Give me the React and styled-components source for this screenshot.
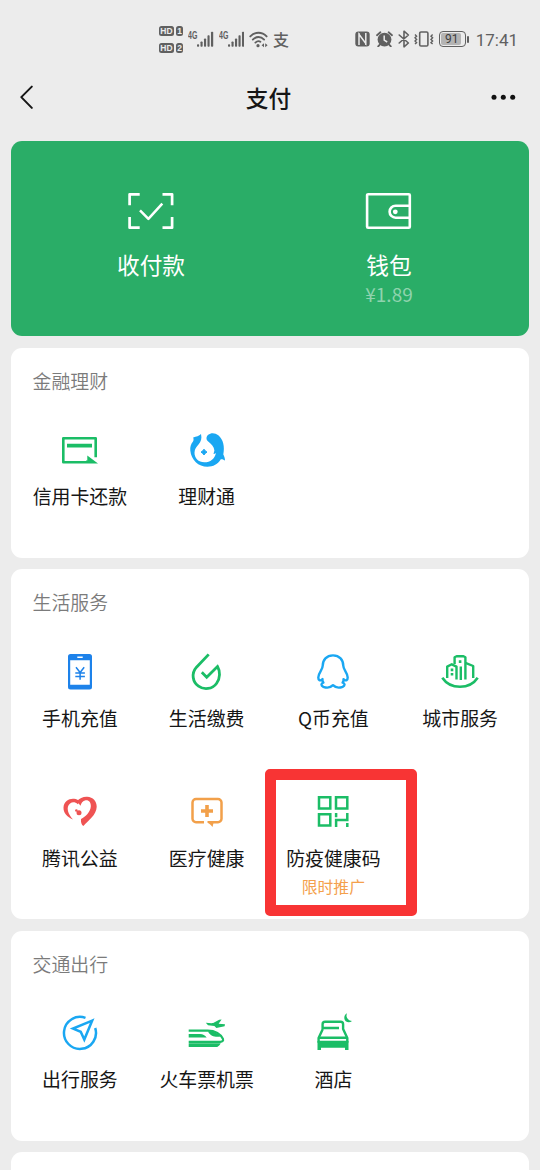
import styled, { createGlobalStyle } from "styled-components";

const GREEN = "#1bbd66";
const BLUE = "#1aa7f2";
const GRAY = "#606060";

const GlobalStyle = createGlobalStyle`
  * {
    box-sizing: border-box;
  }

  body {
    margin: 0;
    overflow: hidden;
    background-color: #ececec;
    font-family: "Noto Sans CJK SC", sans-serif;
    color: #161616;
  }
`;

const finance = [
  { label: "信用卡还款", Icon: CardIcon },
  { label: "理财通", Icon: FishIcon },
];

const life = [
  { label: "手机充值", Icon: PhoneIcon },
  { label: "生活缴费", Icon: DropIcon },
  { label: "Q币充值", Icon: PenguinIcon },
  { label: "城市服务", Icon: CityIcon },
  { label: "腾讯公益", Icon: HeartIcon },
  { label: "医疗健康", Icon: MedicalIcon },
  { label: "防疫健康码", Icon: CodeIcon, note: "限时推广", marked: true },
];

const travel = [
  { label: "出行服务", Icon: CompassIcon },
  { label: "火车票机票", Icon: TrainIcon },
  { label: "酒店", Icon: HotelIcon },
];

export default function App() {
  return (
    <Page>
      <GlobalStyle />
      <StatusBar />
      <Header>
        <BackIcon />
        <Title>支付</Title>
        <MoreIcon />
      </Header>
      <Content>
        <PayCard>
          <PayItem>
            <ScanIcon />
            <PayLabel>收付款</PayLabel>
          </PayItem>
          <PayItem>
            <WalletIcon />
            <PayLabel>钱包</PayLabel>
            <Balance>¥1.89</Balance>
          </PayItem>
        </PayCard>
        <Section title="金融理财" items={finance} />
        <Section title="生活服务" items={life} />
        <Section title="交通出行" items={travel} />
        <Card />
      </Content>
    </Page>
  );
}

function Section({ title, items }) {
  return (
    <Card>
      <SectionTitle>{title}</SectionTitle>
      <Grid>
        {items.map(({ label, Icon, note, marked }) => (
          <Item key={label}>
            <Icon />
            <Label>{label}</Label>
            {note && <Note>{note}</Note>}
            {marked && <Marker />}
          </Item>
        ))}
      </Grid>
    </Card>
  );
}

function StatusBar() {
  return (
    <Status>
      <StatusGroup $gap={5}>
        <HdList>
          <HdRow>
            <Badge $width={15}>HD</Badge>
            <Badge $width={7}>1</Badge>
          </HdRow>
          <HdRow>
            <Badge $width={15}>HD</Badge>
            <Badge $width={7}>2</Badge>
          </HdRow>
        </HdList>
        <Signal />
        <Signal />
        <WifiIcon />
        <PayMark>支</PayMark>
      </StatusGroup>
      <StatusGroup $gap={4.7}>
        <NfcIcon />
        <AlarmIcon />
        <BluetoothIcon />
        <VibrateIcon />
        <Battery>
          <BatteryBody>
            <BatteryLevel>91</BatteryLevel>
          </BatteryBody>
          <BatteryCap />
        </Battery>
        <Time>17:41</Time>
      </StatusGroup>
    </Status>
  );
}

function Signal() {
  return (
    <SignalBox>
      <Network>4G</Network>
      <svg width="17" height="17" viewBox="0 0 17 17" fill={GRAY}>
        <rect x="0" y="13.5" width="2.2" height="2.5" rx="0.8" />
        <rect x="3.6" y="10.5" width="2.2" height="5.5" rx="0.8" />
        <rect x="7.2" y="7.5" width="2.2" height="8.5" rx="0.8" />
        <rect x="10.8" y="4" width="2.2" height="12" rx="0.8" />
        <rect x="14.4" y="0.5" width="2.3" height="15.5" rx="0.8" />
      </svg>
    </SignalBox>
  );
}

function WifiIcon() {
  return (
    <svg width="19" height="17" viewBox="0 0 19 17" fill="none">
      <g stroke={GRAY} strokeWidth="1.9" strokeLinecap="round">
        <path d="M1.3 5.4C6 .6 13 .6 17.6 5.4" />
        <path d="M3.8 8.6c3.4-3.4 8-3.4 11.3 0" />
        <path d="M6.4 11.6c1.8-1.7 3.6-1.8 5-.8" />
      </g>
      <circle cx="9" cy="14.7" r="1.6" fill={GRAY} />
      <path d="M15 12.2v4l-2.4-2zM16.2 12.2v4l2.4-2z" fill={GRAY} />
    </svg>
  );
}

function NfcIcon() {
  return (
    <svg width="16" height="16" viewBox="0 0 16 16" fill="none">
      <rect x="0.3" y="0.5" width="14.4" height="15" rx="3" fill={GRAY} />
      <path
        d="M4 14V3.2l6.8 9.2V2M4 3.2V2M10.8 12.4V14"
        stroke="#ececec"
        strokeWidth="1.5"
      />
    </svg>
  );
}

function AlarmIcon() {
  return (
    <svg width="17" height="16" viewBox="0 0 17 16" fill="none">
      <circle cx="8.5" cy="8.6" r="6.9" fill={GRAY} />
      <path
        d="M1 4.2 4.4 1.3M16 4.2l-3.4-2.9M3.6 13.8l-1.4 1.6M13.4 13.8l1.4 1.6"
        stroke={GRAY}
        strokeWidth="1.8"
        strokeLinecap="round"
      />
      <path d="M8.2 4.6v4.6l3 1.8" stroke="#ececec" strokeWidth="1.5" />
    </svg>
  );
}

function BluetoothIcon() {
  return (
    <svg width="12" height="18" viewBox="0 0 12 18" fill="none">
      <path
        d="m1.2 5 9.2 8L6 16.8V1.2L10.4 5l-9.2 8"
        stroke={GRAY}
        strokeWidth="1.6"
        strokeLinejoin="round"
        strokeLinecap="round"
      />
    </svg>
  );
}

function VibrateIcon() {
  return (
    <svg width="20" height="16" viewBox="0 0 20 16" fill="none">
      <rect
        x="5.7"
        y="1"
        width="8.2"
        height="14"
        rx="1.3"
        stroke={GRAY}
        strokeWidth="1.6"
      />
      <path
        d="M1 3.6 2.6 5.2 1 6.8 2.6 8.4 1 10l1.6 1.6L1 13M18.6 3.6 17 5.2l1.6 1.6L17 8.4l1.6 1.6-1.6 1.6 1.6 1.4"
        stroke={GRAY}
        strokeWidth="1.4"
      />
    </svg>
  );
}

function BackIcon() {
  return (
    <svg width="28" height="26" viewBox="0 0 28 26" fill="none">
      <path
        d="M11.8 1.6 1.3 12.1l10.5 10.800"
        stroke="#161616"
        strokeWidth="2"
        strokeLinecap="round"
        strokeLinejoin="round"
      />
    </svg>
  );
}

function MoreIcon() {
  return (
    <svg width="28" height="8" viewBox="0 0 28 8" fill="#111">
      <circle cx="5" cy="3.2" r="2.500" />
      <circle cx="14.300" cy="3.2" r="2.500" />
      <circle cx="23.700" cy="3.2" r="2.500" />
    </svg>
  );
}

function ScanIcon() {
  return (
    <svg width="48" height="40" viewBox="0 0 48 40" fill="none">
      <g stroke="#fff" strokeLinejoin="round">
        <path
          d="M12.7 3.3H2.600v11M35.500 3.300h9.600v11M12.700 36.700H2.600V26M35.500 36.700h9.600V26"
          strokeWidth="2.700"
        />
        <path d="m13 19.300 8.400 8.600 13.900-15.200" strokeWidth="2.500" />
      </g>
    </svg>
  );
}

function WalletIcon() {
  return (
    <svg width="48" height="40" viewBox="0 0 48 40" fill="none">
      <g stroke="#fff" strokeWidth="2.600">
        <rect x="2.100" y="3.200" width="42.700" height="33.600" rx="1" />
        <path d="M44.800 14.700H30.600a6 6 0 0 0 0 12h14.200" />
      </g>
      <circle cx="30.300" cy="20.800" r="2.400" fill="#fff" />
    </svg>
  );
}

function CardIcon() {
  return (
    <Glyph>
      <path
        d="M26 32.200H3.300V8.200h32.400v19"
        stroke={GREEN}
        strokeWidth="2.600"
        strokeLinejoin="round"
      />
      <path d="M7 13.800h25v3.700H7zM27.300 25.400 38 33.500H26v-3h1.300z" fill={GREEN} />
    </Glyph>
  );
}

function FishIcon() {
  return (
    <Glyph>
      <path
        d="M14 4C12 6.200 9.500 6.400 6.200 7.400c.6 1.600.4 2.800-.2 4.200C3.800 14.500 3 17 3.300 20.500 4.200 30 11.400 36.800 20.400 36.800c5.800 0 10.600-2.700 13.400-7.500 1.700-.2 2.900.3 4.200 1.500 0-2.500-.6-4.200-1.700-6.300C37.900 16.500 36.300 9.500 31.300 5.300 28.300 2.600 23.800 2.400 21.200 4.800c-2.300 2.100-2.200 5 0 6.800 3.200 2.600 5.800 5.200 6.200 8.900l-.9 3.600c1-.1 1.700-.5 2.400-1.200C28 28.500 23.300 32.300 17.300 32.300 11.500 32.300 7.300 28 7.500 22.500c.2-3.500 2-5.500 4-7.900 2.500-3 3.600-6.100 2.500-10.600z"
        fill={BLUE}
      />
      <path
        d="M17 19.200q1.100 2 3 2.900-1.900.9-3 2.900-1.100-2-3-2.900 1.900-.9 3-2.900z"
        fill={BLUE}
        stroke={BLUE}
      />
    </Glyph>
  );
}

function PhoneIcon() {
  return (
    <Glyph>
      <path
        fillRule="evenodd"
        d="M10.500 2h19A2.500 2.500 0 0 1 32 4.500v30.400a2.500 2.500 0 0 1-2.500 2.500h-19A2.500 2.500 0 0 1 8 34.900V4.500A2.500 2.500 0 0 1 10.500 2zM10.200 8.300v24.500h19.600V8.300zM17.300 4.500v1.600h5.400V4.500z"
        fill="#1d82ea"
      />
      <path
        d="m16 15.300 4.100 5.200 4.100-5.200M20.100 20.500v7.300M15.300 21h9.600M15.300 24.400h9.600"
        stroke="#1d82ea"
        strokeWidth="1.500"
      />
    </Glyph>
  );
}

function DropIcon() {
  return (
    <Glyph>
      <path
        d="M21.700 2.400 9.500 15.200C4 21.500 5.600 30 11.500 34.200c5.600 4 13.800 3 18-2.700 4-5.400 3.700-12.300 1-17L19.700 25.200 14.800 20.300"
        stroke={GREEN}
        strokeWidth="2.800"
      />
    </Glyph>
  );
}

function PenguinIcon() {
  return (
    <Glyph>
      <path
        d="M20 3.400C13.500 3.400 9.700 8 9.700 13.800c0 4-4.400 6.800-4.400 11.700 0 2.500 1.500 4 4.200 1.600-.4 1.700 0 2.500.9 3.500-2.600.8-2.600 3 0 4.200 3.200 1.300 7.200.8 9.600-1.600 2.400 2.400 6.400 2.900 9.600 1.600 2.600-1.200 2.600-3.400 0-4.200.9-1 1.300-1.800.9-3.500 2.700 2.400 4.200.9 4.200-1.600 0-4.900-4.400-7.700-4.400-11.700C30.300 8 26.500 3.400 20 3.400z"
        stroke={BLUE}
        strokeWidth="2.400"
        strokeLinejoin="round"
      />
    </Glyph>
  );
}

function CityIcon() {
  return (
    <Glyph>
      <g stroke={GREEN} strokeWidth="2.400" strokeLinejoin="round">
        <path d="M2.300 25.800c8 12 27.400 12 35.400 0" strokeWidth="2.600" />
        <path d="M7.200 26V14.600l4.600-2.300 4.700 2.300v13" />
        <path d="M14.600 12V5.300l2-1h6.900l1.900 1v22.300" />
        <path d="M25.400 10.800 33.200 14v12M20.800 14.500v13.500" />
      </g>
      <path
        d="M18.800 8.300h2.600v2.600h-2.600zM10.700 16.600h2.600v2.600h-2.600zM10.700 21h2.600v2.600h-2.600z"
        fill={GREEN}
      />
    </Glyph>
  );
}

function HeartIcon() {
  return (
    <Glyph>
      <g fill="#ef5353">
        <path d="M13 27.600C7 25 3.300 20.800 3.500 15.500 3.800 9.600 9 6.300 14 6.800c2.500.2 4.700 1.300 6 2.700l-2.200 2.700c-2.600-2.200-5.300-2.500-7.700-.7-4.600 3.800-1.900 10.700 2.900 16.100z" />
        <path d="M17 9.500C19.500 6 23.200 4.600 27.200 4.800c5.800.3 9.600 4.600 9.500 10-.2 8.400-8.800 14-13.300 19.200-1.900-1.200-2.700-3.500-2.400-7 4.800-2.400 9.200-6.900 9.800-12.200.4-4.300-1.800-7-5.200-6.600-3 .4-4.500 3-5.100 5.500z" />
        <circle cx="19" cy="20.700" r="2.500" />
        <circle cx="16.400" cy="18.500" r="1.300" />
      </g>
    </Glyph>
  );
}

function MedicalIcon() {
  return (
    <Glyph>
      <path
        d="M17 30.200H9a3.500 3.500 0 0 1-3.500-3.500V10.500A3.500 3.500 0 0 1 9 7h22a3.500 3.500 0 0 1 3.500 3.500v16.200a3.500 3.500 0 0 1-3.500 3.500h-5.500"
        stroke="#f2a04a"
        strokeWidth="2.500"
      />
      <path
        d="M18.200 13h3.600v4.200H26v3.600h-4.200V25h-3.600v-4.200H14v-3.600h4.200zM20.500 29H27l-1.500 6c-1.200-1.500-3.200-3.500-5-4.200z"
        fill="#f2a04a"
      />
    </Glyph>
  );
}

function CodeIcon() {
  return (
    <Glyph>
      <g stroke={GREEN} strokeWidth="2.500">
        <path d="M6 5.200h11.300v11.400H6zM23 5.200h11.300v11.400H23zM6 22.200h11.300v11.400H6z" />
        <path d="M23.100 21v4.300M23.100 35v-6.900h11.200V21M34.300 31v4" />
      </g>
    </Glyph>
  );
}

function CompassIcon() {
  return (
    <Glyph>
      <g stroke={BLUE} strokeWidth="2.500">
        <path d="M25.500 4.900A16 16 0 1 0 35.200 15" />
        <path d="M32.200 7.600 13 15.600l7.700 3.200 3.600 7.800z" />
      </g>
    </Glyph>
  );
}

function TrainIcon() {
  return (
    <Glyph>
      <g fill={GREEN}>
        <path d="M18.800 9.800c3 .2 5.200.6 7.400.3l6-3.400 2.400-.2-3 4.200 6.400.5-.4 2-8.200 1.800-2-1.900-6.400-.9z" />
        <path d="M1.700 21H13c3 .3 5 1.300 6.700 3.400H1.700zM21 18.400l5 .4c3 .8 5.800 2.300 7.800 4.600-4.800 1-10 .3-12.800-5zM1.700 30.300h32c-.8 1.800-2 2.800-3.500 3.600H1.700z" />
      </g>
      <path
        d="M1.700 17.600h19C28 17.600 34 21 36 26c.6 1.700-.6 2.900-2.700 2.900H1.700"
        stroke={GREEN}
        strokeWidth="2.100"
      />
    </Glyph>
  );
}

function HotelIcon() {
  return (
    <Glyph>
      <g stroke={GREEN} strokeWidth="2.400" strokeLinejoin="round">
        <path d="M9.600 16v-4.700A2.500 2.500 0 0 1 12.100 8.800h15.500a2.500 2.500 0 0 1 2.500 2.500V16l4.200 9v4H5.600v-4l4.200-9" />
        <path d="M10 15h16M6 24.800h28" />
      </g>
      <path d="M4.500 28h31v9H32v-2.300H8V37H4.500z" fill={GREEN} />
      <path
        d="M34 .3c-1.500 3.700.6 7 5 7.800-3 2.600-7.500.8-7.700-2.900C31.200 3 32.300 1 34 .3z"
        fill={GREEN}
      />
    </Glyph>
  );
}

const Page = styled.div`
  width: 540px;
  height: 1170px;
  overflow: hidden;
  background-color: #ececec;
`;

const Status = styled.div`
  display: flex;
  justify-content: space-between;
  align-items: center;
  height: 78px;
  padding: 0 22px 0 159px;
`;

const StatusGroup = styled.div`
  display: flex;
  align-items: center;
  gap: ${(props) => props.$gap}px;
`;

const HdList = styled.div`
  display: flex;
  flex-direction: column;
  gap: 7px;
`;

const HdRow = styled.div`
  display: flex;
  gap: 2px;
`;

const Badge = styled.span`
  width: ${(props) => props.$width}px;
  height: 10px;
  border-radius: 2.5px;
  background-color: ${GRAY};
  color: #ececec;
  font: bold 8.5px/10px "Liberation Sans", sans-serif;
  text-align: center;
`;

const SignalBox = styled.div`
  display: flex;
  align-items: flex-start;
  width: 25.5px;
`;

const Network = styled.span`
  width: 9px;
  color: ${GRAY};
  font: bold 10px/10px "Liberation Sans", sans-serif;
  transform: scaleX(0.7);
  transform-origin: left;
`;

const PayMark = styled.span`
  color: ${GRAY};
  font-size: 16px;
  font-weight: 500;
  line-height: 18px;
`;

const Battery = styled.div`
  display: flex;
  align-items: center;
  gap: 1.5px;
`;

const BatteryBody = styled.div`
  width: 27px;
  height: 16px;
  padding: 1px;
  border: 1.6px solid ${GRAY};
  border-radius: 4px;
`;

const BatteryLevel = styled.div`
  height: 12px;
  width: 20px;
  border-radius: 2px;
  background-color: #b4b4b4;
  color: #404040;
  font: 12px/12px Roboto, sans-serif;
  padding-left: 4px;
`;

const BatteryCap = styled.div`
  width: 2px;
  height: 7px;
  border-radius: 1px;
  background-color: ${GRAY};
`;

const Time = styled.span`
  margin: 2px 0 0 1.5px;
  color: ${GRAY};
  font: 17px/20px Roboto, sans-serif;
`;

const Header = styled.header`
  display: flex;
  justify-content: space-between;
  align-items: center;
  height: 40px;
  padding: 0 23px 0 20px;
`;

const Title = styled.h1`
  margin: 0;
  font-size: 22.7px;
  font-weight: 500;
  line-height: 32px;
`;

const Content = styled.main`
  display: flex;
  flex-direction: column;
  gap: 11.5px;
  padding: 22.5px 11px 0;
`;

const PayCard = styled.section`
  display: grid;
  grid-template-columns: 1fr 1fr;
  height: 195.5px;
  padding: 50px 21px 0;
  border-radius: 11px;
  background-color: #2aad67;
`;

const PayItem = styled.div`
  display: flex;
  flex-direction: column;
  align-items: center;
  color: #fff;
`;

const PayLabel = styled.span`
  margin-top: 17px;
  font-size: 22.7px;
  line-height: 34px;
`;

const Balance = styled.span`
  color: #8fd3ae;
  font-size: 19px;
  line-height: 24px;
`;

const Card = styled.section`
  flex-shrink: 0;
  min-height: 60px;
  padding: 19px 5.5px 17.5px;
  border-radius: 11px;
  background-color: #fff;
`;

const SectionTitle = styled.h2`
  margin: 0 0 35.5px 16px;
  color: #7b7b7b;
  font-size: 18.9px;
  font-weight: 350;
  line-height: 28px;
`;

const Grid = styled.div`
  display: grid;
  grid-template-columns: repeat(4, 1fr);
  grid-auto-rows: 110px;
  row-gap: 30px;
`;

const Item = styled.div`
  position: relative;
  display: flex;
  flex-direction: column;
  align-items: center;
`;

const Glyph = styled.svg.attrs({ viewBox: "0 0 40 40", fill: "none" })`
  flex-shrink: 0;
  width: 40px;
  height: 40px;
`;

const Label = styled.span`
  margin-top: 12px;
  font-size: 18.9px;
  line-height: 28px;
  white-space: nowrap;
`;

const Note = styled.span`
  margin-top: 4px;
  color: #f4a04c;
  font-size: 15.8px;
  line-height: 22px;
`;

const Marker = styled.div`
  position: absolute;
  top: -23px;
  left: -5px;
  width: 152px;
  height: 147.5px;
  border: 11px solid #f83434;
  border-radius: 5px;
`;
